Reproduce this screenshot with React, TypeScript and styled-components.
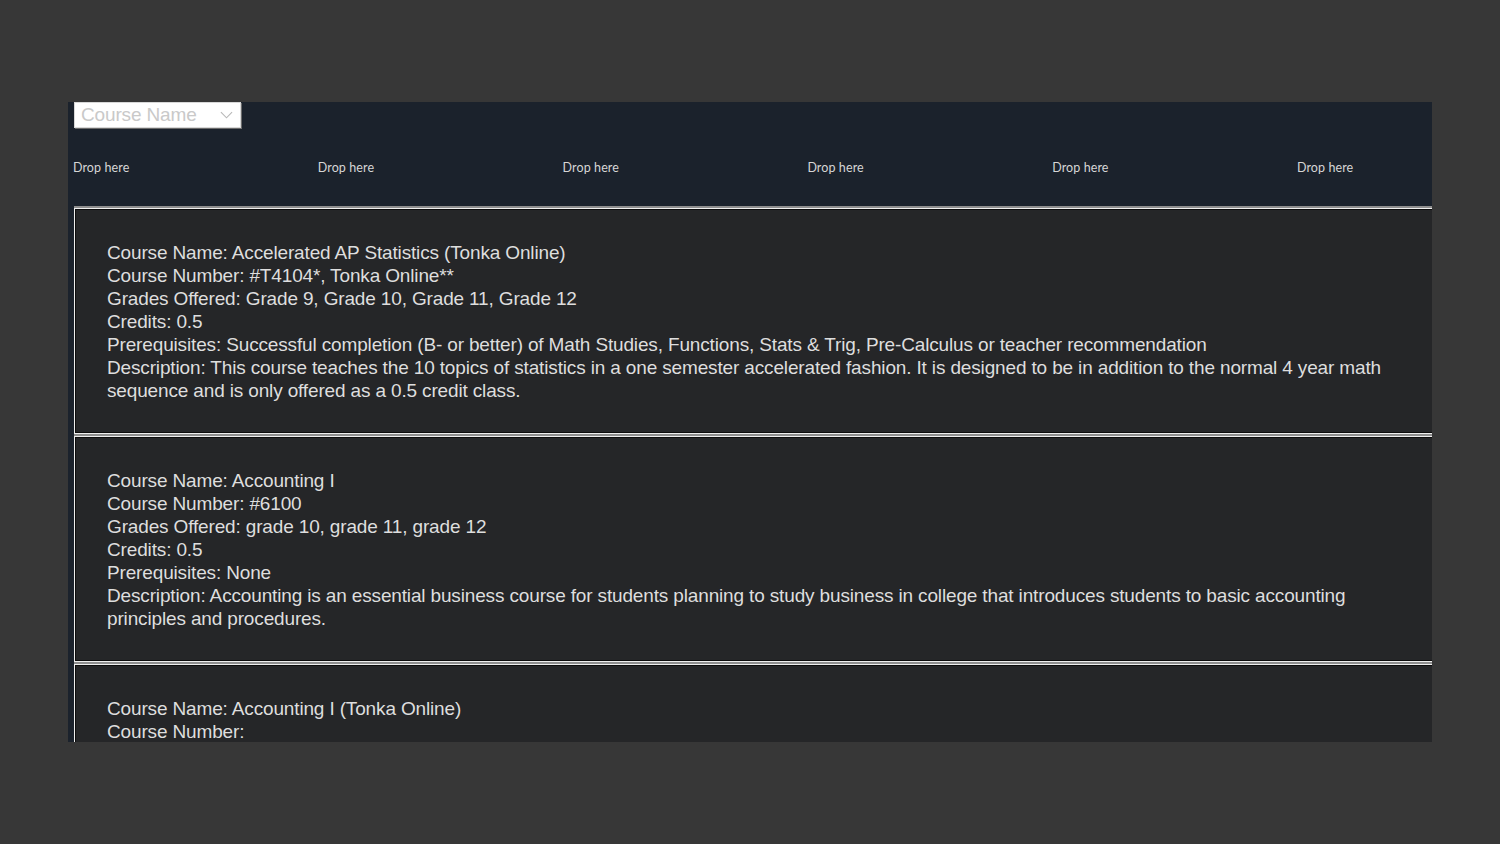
import styled, { createGlobalStyle } from "styled-components";

const courses = [
  {
    name: "Accelerated AP Statistics (Tonka Online)",
    number: "#T4104*, Tonka Online**",
    grades: "Grade 9, Grade 10, Grade 11, Grade 12",
    credits: "0.5",
    prereq:
      "Successful completion (B- or better) of Math Studies, Functions, Stats & Trig, Pre-Calculus or teacher recommendation",
    desc: "This course teaches the 10 topics of statistics in a one semester accelerated fashion. It is designed to be in addition to the normal 4 year math sequence and is only offered as a 0.5 credit class.",
  },
  {
    name: "Accounting I",
    number: "#6100",
    grades: "grade 10, grade 11, grade 12",
    credits: "0.5",
    prereq: "None",
    desc: "Accounting is an essential business course for students planning to study business in college that introduces students to basic accounting principles and procedures.",
  },
  {
    name: "Accounting I (Tonka Online)",
    number: "",
    grades: "grade 10, grade 11, grade 12",
    credits: "0.5",
    prereq: "None",
    desc: "",
  },
];

export default function App() {
  return (
    <>
      <GlobalStyle />
      <Page>
        <Panel>
          <Toolbar>
            <SortSelect>
              <span>Course Name</span>
              <svg viewBox="0 0 14 8" width="13" height="8" fill="none" stroke="#b8b8b8" strokeWidth="1.2">
                <path d="M1 1l6 6 6-6" />
              </svg>
            </SortSelect>
          </Toolbar>
          <DropRow>
            {Array.from({ length: 6 }).map((_, i) => (
              <DropZone key={i}>Drop here</DropZone>
            ))}
          </DropRow>
          <CardList>
            {courses.map((c) => (
              <Card key={c.name}>
                <Line>Course Name: {c.name}</Line>
                <Line>Course Number: {c.number}</Line>
                <Line>Grades Offered: {c.grades}</Line>
                <Line>Credits: {c.credits}</Line>
                <Line>Prerequisites: {c.prereq}</Line>
                <Line>Description: {c.desc}</Line>
              </Card>
            ))}
          </CardList>
        </Panel>
      </Page>
    </>
  );
}

const GlobalStyle = createGlobalStyle`
  html, body {
    margin: 0;
    background: #373737;
  }
`;

const Page = styled.div`
  padding: 102px 68px;
`;

const Panel = styled.div`
  height: 640px;
  overflow: hidden;
  background: #1b222c;
  padding-left: 5px;
`;

const Toolbar = styled.div`
  display: flex;
  padding-left: 1px;
`;

const SortSelect = styled.div`
  width: 167px;
  height: 26px;
  box-sizing: border-box;
  background: #ffffff;
  border: 1px solid #d8d8d8;
  box-shadow: 1px 1px 0 #6b6b6b;
  display: flex;
  align-items: center;
  justify-content: space-between;
  padding: 0 7px 0 6px;
  font-family: "Liberation Sans", Arial, sans-serif;
  font-size: 19px;
  letter-spacing: -0.15px;
  color: #c9c9c9;
`;

const DropRow = styled.div`
  display: grid;
  grid-template-columns: repeat(6, 244.8px);
  height: 78px;
  align-items: center;
`;

const DropZone = styled.div`
  font-family: "Lato", "Noto Sans", sans-serif;
  font-size: 12.5px;
  letter-spacing: 0.1px;
  color: #d6d6d6;
`;

const CardList = styled.div`
  display: flex;
  flex-direction: column;
  width: 1400px;
  padding-left: 1px;
`;

const Card = styled.div`
  background: #252628;
  border: 1px solid #eeeeee;
  box-shadow: inset 0 0 0 1px #0c0c0c, 0 -2px 0 #8e8e8e;
  margin-top: 2px;
  padding: 32px 30px 30px 32px;
  font-family: "Liberation Sans", Arial, sans-serif;
  font-size: 19px;
  letter-spacing: -0.15px;
  line-height: 23px;
  color: #dedede;
  min-height: 226px;
  box-sizing: border-box;
`;

const Line = styled.div`
  max-width: 1295px;
`;
